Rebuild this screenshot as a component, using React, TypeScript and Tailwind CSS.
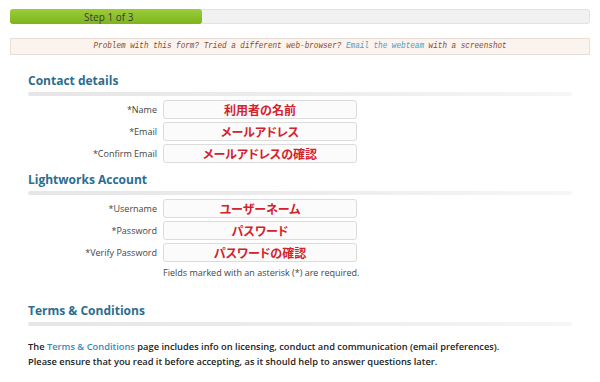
import React from 'react';

const font = { fontFamily: '"Open Sans", "Noto Sans CJK JP", sans-serif' };

interface Field {
  label: string;
  value: string;
}

const contact: Field[] = [
  { label: '*Name', value: '利用者の名前' },
  { label: '*Email', value: 'メールアドレス' },
  { label: '*Confirm Email', value: 'メールアドレスの確認' },
];

const account: Field[] = [
  { label: '*Username', value: 'ユーザーネーム' },
  { label: '*Password', value: 'パスワード' },
  { label: '*Verify Password', value: 'パスワードの確認' },
];

function Heading({ title }: { title: string }) {
  return (
    <div>
      <h2 className="text-[12px] leading-[18px] font-bold text-[#2c6d92]">{title}</h2>
      <div className="mt-[2px] h-[4px] w-full bg-gradient-to-r from-[#e6e6e6] via-[#ececec] to-[#f6f6f6] rounded-sm" />
    </div>
  );
}

function Rows({ fields }: { fields: Field[] }) {
  return (
    <div className="flex flex-col gap-[3px]">
      {fields.map(f => (
        <div key={f.label} className="flex items-center">
          <div className="w-[129px] text-right text-[9px] text-[#444]">{f.label}</div>
          <div className="ml-[6px] w-[194px] h-[19px] border border-[#dcdcdc] rounded-[3px] bg-[#fbfbfb] flex items-center justify-center">
            <span
              className="text-[12px] font-bold text-[#d4212b] leading-none [font-feature-settings:'palt']"
              style={{ fontFamily: '"Noto Sans CJK JP", sans-serif' }}
            >
              {f.value}
            </span>
          </div>
        </div>
      ))}
    </div>
  );
}

export default function App() {
  return (
    <div className="w-[600px] h-[382px] bg-white overflow-hidden" style={font}>
      <div className="px-[10px] pt-[9px]">
        {/* Progress */}
        <div className="h-[15px] rounded-[3px] bg-[#f1f1f1] border border-[#e2e2e2] flex">
          <div className="w-[192px] -m-px h-[15px] rounded-[3px] bg-gradient-to-b from-[#9ccc3c] to-[#7cb518] flex items-center">
            <span className="ml-[74px] text-[10px] text-[#3a3a3a] leading-none">Step 1 of 3</span>
          </div>
        </div>

        {/* Notice */}
        <div className="mt-[14px] h-[17px] bg-[#fbf3ee] border border-[#eadfd8] flex items-center justify-center">
          <span
            className="italic text-[9px] scale-x-[0.85] whitespace-nowrap text-[#8a4a26]"
            style={{ fontFamily: '"Liberation Mono", monospace' }}
          >
            Problem with this form? Tried a different web-browser?{' '}
            <span className="text-[#4a9cc4]">Email the webteam</span> with a screenshot
          </span>
        </div>
      </div>

      <div className="px-[28px]">
        <div className="mt-[17px]">
          <Heading title="Contact details" />
        </div>
        <div className="mt-[4px]">
          <Rows fields={contact} />
        </div>

        <div className="mt-[8px]">
          <Heading title="Lightworks Account" />
        </div>
        <div className="mt-[4px]">
          <Rows fields={account} />
        </div>
        <p className="mt-[4px] ml-[135px] text-[9px] text-[#444]">Fields marked with an asterisk (*) are required.</p>

        <div className="mt-[22px]">
          <Heading title="Terms & Conditions" />
        </div>
        <div className="mt-[13px] text-[9.3px] leading-[15px] font-semibold text-[#222]">
          <p>
            The <span className="text-[#3d88b5]">Terms &amp; Conditions</span> page includes info on licensing, conduct and
            communication (email preferences).
          </p>
          <p>Please ensure that you read it before accepting, as it should help to answer questions later.</p>
        </div>
      </div>
    </div>
  );
}
